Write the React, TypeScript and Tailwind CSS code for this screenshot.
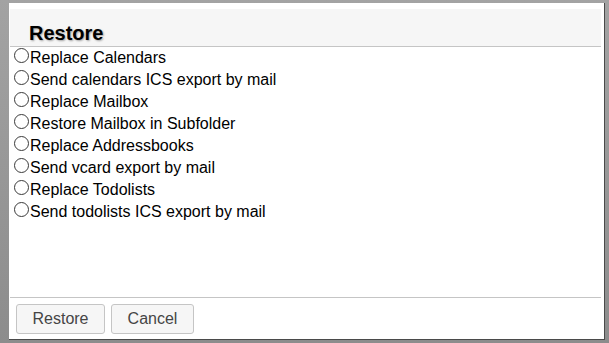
import React from "react";

const options = [
  "Replace Calendars",
  "Send calendars ICS export by mail",
  "Replace Mailbox",
  "Restore Mailbox in Subfolder",
  "Replace Addressbooks",
  "Send vcard export by mail",
  "Replace Todolists",
  "Send todolists ICS export by mail",
];

export default function App() {
  return (
    <div className="w-[609px] h-[343px] overflow-hidden bg-gradient-to-b from-[#a3a3a3] to-[#8c8c8c] pt-[3px] pl-[9px] font-['Liberation_Sans',Arial,sans-serif]">
      <div className="w-[596px] h-[337px] bg-white border-r border-b border-[#4a4a4a] flex flex-col pt-[6px] pl-[1px] pr-[3px]">
        <div className="h-[38px] shrink-0 bg-[#f6f6f6] border-b border-[#c5c5c5] pl-[19px] pt-[12px]">
          <div className="text-[20px] leading-[24px] font-bold text-black [text-shadow:1px_1px_2px_rgba(0,0,0,0.35)]">
            Restore
          </div>
        </div>
        <div className="flex flex-col pl-[4px]">
          {options.map((o) => (
            <div key={o} className="h-[22px] flex items-start">
              <span className="mt-[1px] w-[15px] h-[15px] shrink-0 rounded-full border border-[#3a3a3a] bg-white" />
              <span className="ml-[1px] text-[16px] leading-[22px] text-black whitespace-nowrap">{o}</span>
            </div>
          ))}
        </div>
        <div className="flex-1" />
        <div className="border-t border-[#c5c5c5] pt-[6px] pb-[5px] pl-[6px] flex gap-[6px]">
          <button className="w-[89px] h-[30px] rounded-[3px] border border-[#c5c5c5] bg-[#f6f6f6] text-[16px] text-[#454545] leading-[28px] text-center">
            Restore
          </button>
          <button className="w-[83px] h-[30px] rounded-[3px] border border-[#c5c5c5] bg-[#f6f6f6] text-[16px] text-[#454545] leading-[28px] text-center">
            Cancel
          </button>
        </div>
      </div>
    </div>
  );
}
